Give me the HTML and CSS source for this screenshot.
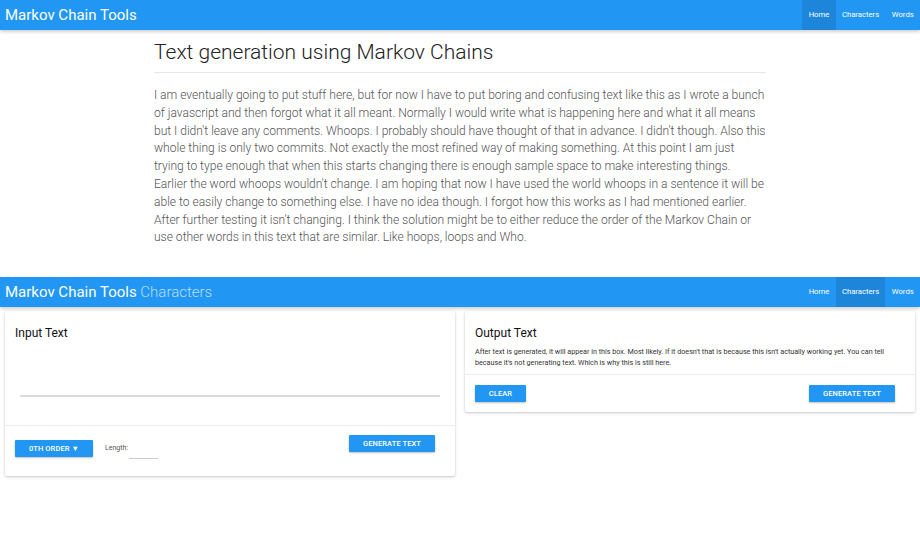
FILE: index.html
```html
<!DOCTYPE html>
<html>
<head>
<meta charset="utf-8">
<link rel="stylesheet" href="styles.css">
</head>
<body>
<nav class="navbar">
  <div class="brand">Markov Chain Tools</div>
  <ul class="nav">
    <li class="active">Home</li>
    <li>Characters</li>
    <li>Words</li>
  </ul>
</nav>
<main class="container">
  <h1 class="title">Text generation using Markov Chains</h1>
  <p class="lead">I am eventually going to put stuff here, but for now I have to put boring and confusing text like this as I wrote a bunch of javascript and then forgot what it all meant. Normally I would write what is happening here and what it all means but I didn't leave any comments. Whoops. I probably should have thought of that in advance. I didn't though. Also this whole thing is only two commits. Not exactly the most refined way of making something. At this point I am just trying to type enough that when this starts changing there is enough sample space to make interesting things. Earlier the word whoops wouldn't change. I am hoping that now I have used the world whoops in a sentence it will be able to easily change to something else. I have no idea though. I forgot how this works as I had mentioned earlier. After further testing it isn't changing. I think the solution might be to either reduce the order of the Markov Chain or use other words in this text that are similar. Like hoops, loops and Who.</p>
</main>
<nav class="navbar second">
  <div class="brand">Markov Chain Tools <span class="sub">Characters</span></div>
  <ul class="nav">
    <li>Home</li>
    <li class="active">Characters</li>
    <li>Words</li>
  </ul>
</nav>
<section class="cards">
  <div class="card">
    <div class="card-body">
      <h2 class="card-title">Input Text</h2>
      <div class="textarea"></div>
    </div>
    <div class="card-actions input-actions">
      <div class="left-group">
        <button class="btn">0TH ORDER ▼</button>
        <label class="len">Length:</label>
        <span class="len-input"></span>
      </div>
      <button class="btn gen-top">GENERATE TEXT</button>
    </div>
  </div>
  <div class="card">
    <div class="card-body">
      <h2 class="card-title">Output Text</h2>
      <p class="out">After text is generated, it will appear in this box. Most likely. If it doesn't that is because this isn't actually working yet. You can tell because it's not generating text. Which is why this is still here.</p>
    </div>
    <div class="card-actions output-actions">
      <button class="btn clear">CLEAR</button>
      <button class="btn">GENERATE TEXT</button>
    </div>
  </div>
</section>
</body>
</html>
```

FILE: styles.css
```css
* { box-sizing: border-box; }
body {
  margin: 0;
  font-family: Roboto, "Liberation Sans", sans-serif;
  background: #fff;
  color: #222;
}
.navbar {
  height: 30px;
  background: #2196F3;
  display: flex;
  justify-content: space-between;
  align-items: stretch;
  box-shadow: 0 2px 3px rgba(0,0,0,0.18);
  position: relative;
  z-index: 1;
}
.brand {
  color: #fff;
  font-size: 15px;
  line-height: 30px;
  padding-left: 5px;
  white-space: nowrap;
}
.brand .sub {
  font-weight: 300;
  color: #BBDEFB;
}
.nav {
  list-style: none;
  margin: 0;
  padding: 0;
  display: flex;
}
.nav li {
  color: #fff;
  font-size: 7.7px;
  line-height: 30px;
  padding: 0 6.3px;
}
.nav li.active {
  background: rgba(0,0,0,0.1);
}
.container {
  width: 612px;
  margin: 0 auto;
  padding-top: 10px;
  height: 247px;
}
.title {
  font-size: 21px;
  font-weight: 300;
  color: #222;
  margin: 0;
  padding-bottom: 7px;
  line-height: 25px;
  border-bottom: 1px solid #e6e6e6;
}
.lead {
  margin: 14px 0 0;
  font-size: 12.1px;
  letter-spacing: -0.025px;
  line-height: 17.8px;
  font-weight: 300;
  color: #555;
}
.cards {
  display: flex;
  align-items: flex-start;
  gap: 10px;
  padding: 4px 5px;
}
.card {
  width: 450px;
  background: #fff;
  box-shadow: 0 1px 3px rgba(0,0,0,0.22), 0 0 1px rgba(0,0,0,0.08);
  border-radius: 2px;
}
.card-body {
  padding: 15px 10px 0;
}
.card-title {
  margin: 0;
  font-size: 12px;
  font-weight: 400;
  color: #111;
  line-height: 14px;
}
.textarea {
  margin: 55px 5px 0;
  height: 2px;
  background: #ddd;
}
.card:first-child .card-body {
  height: 115px;
  border-bottom: 1px solid #eee;
}
.out {
  margin: 6px 0 0;
  font-size: 7.2px;
  line-height: 11px;
  color: #333;
}
.card:last-child .card-body {
  height: 64px;
  border-bottom: 1px solid #eee;
}
.card-actions {
  display: flex;
  justify-content: space-between;
  padding: 0 20px 0 10px;
}
.input-actions {
  height: 50px;
  align-items: flex-start;
}
.output-actions {
  height: 37px;
  padding-top: 10px;
}
.left-group {
  display: flex;
  align-items: center;
  margin-top: 11px;
}
.btn {
  border: 0;
  background: #2196F3;
  color: #fff;
  font-family: Roboto, "Liberation Sans", sans-serif;
  font-size: 7.5px;
  font-weight: 500;
  letter-spacing: 0.1px;
  height: 17px;
  width: 86px;
  padding: 0;
  border-radius: 1px;
  box-shadow: 0 1px 2px rgba(0,0,0,0.25);
  white-space: nowrap;
}
.left-group .btn { width: 78px; }
.clear { width: 51px; }
.gen-top { margin-top: 9px; }
.len {
  font-size: 7px;
  color: #555;
  margin-left: 12px;
}
.len-input {
  width: 29px;
  height: 1px;
  background: #ccc;
  margin-top: 21px;
  margin-left: 1px;
}
```
